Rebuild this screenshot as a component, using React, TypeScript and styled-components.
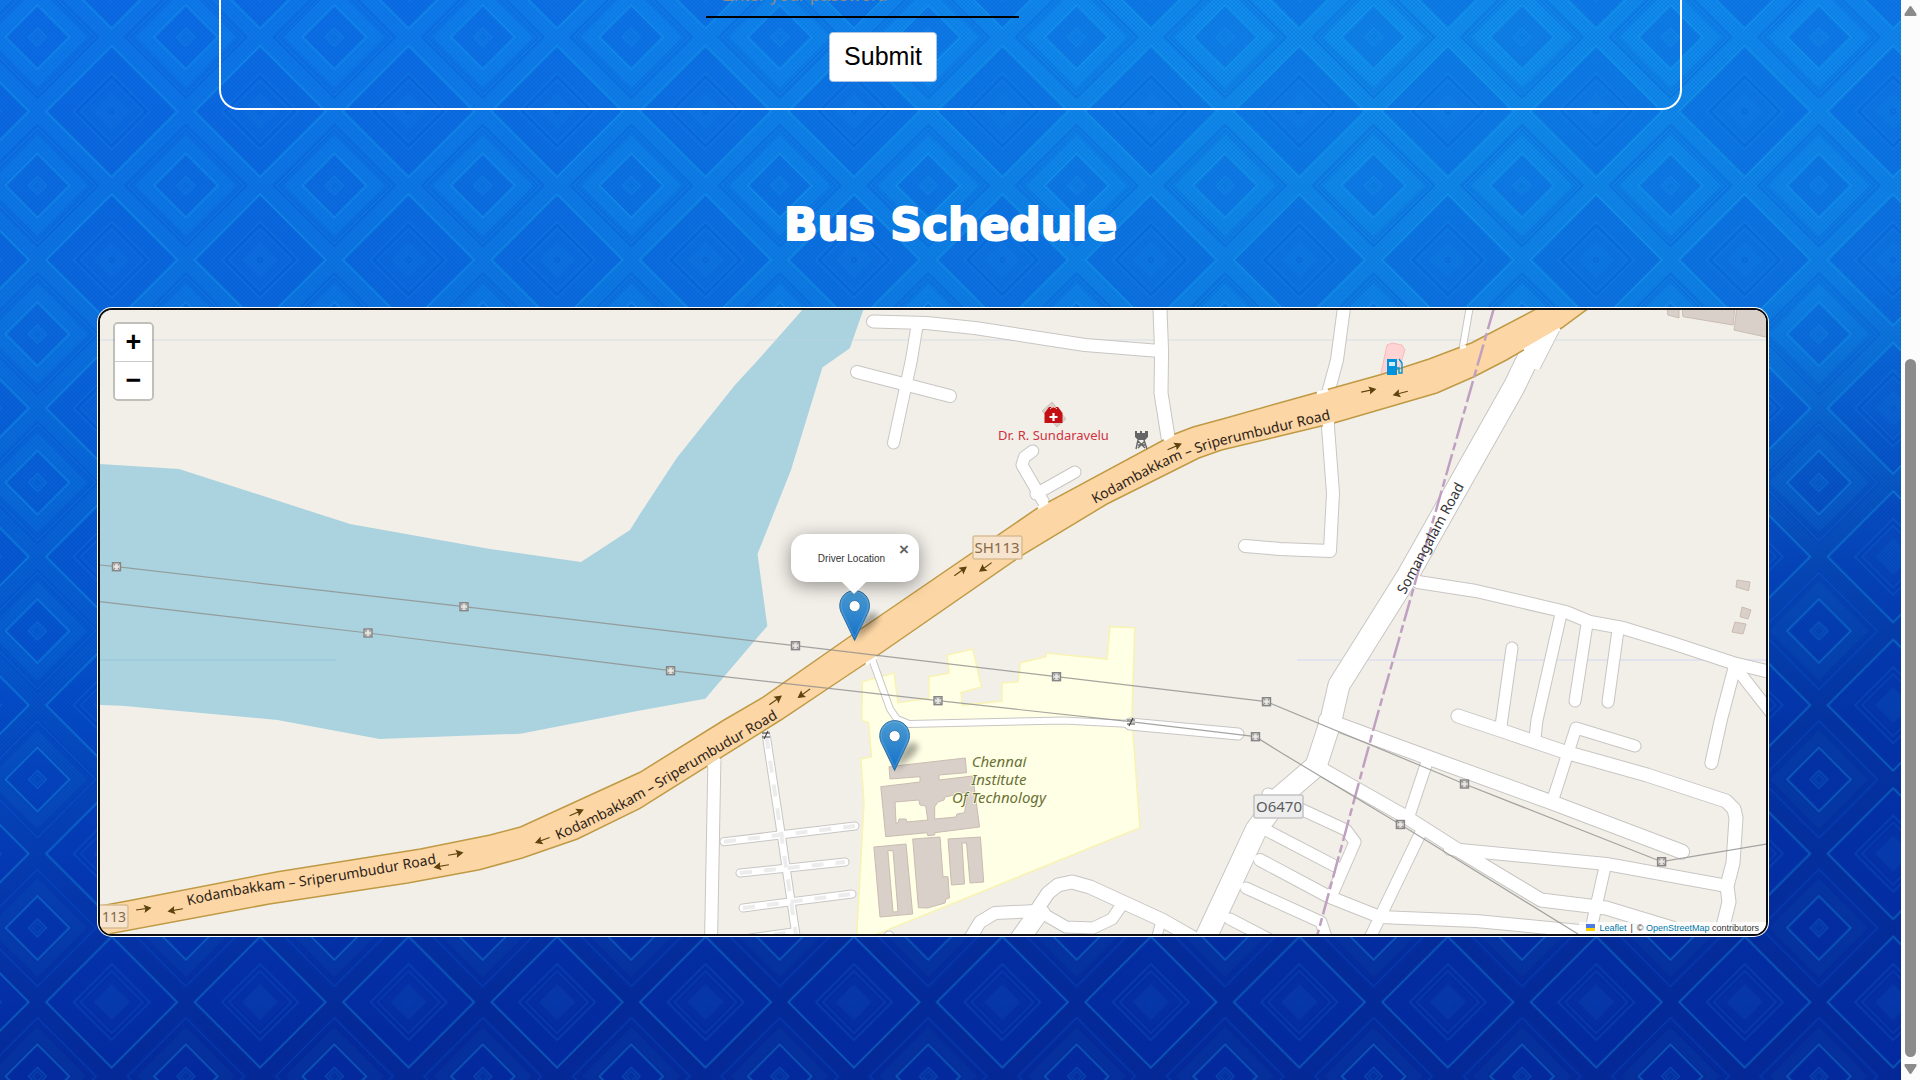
import React from "react";
import styled, { createGlobalStyle, css } from "styled-components";

const GlobalStyle = createGlobalStyle`
  *, *::before, *::after { box-sizing: border-box; }
  html, body { margin: 0; height: 100%; }
  body { overflow: hidden; font-family: "Liberation Sans", Arial, sans-serif; background: #0441b8; }
  #root { height: 100%; }
`;

const Shell = styled.div`
  display: flex;
  height: 100vh;
`;

const Page = styled.main`
  position: relative;
  isolation: isolate;
  flex: 1;
  min-width: 0;
  overflow: hidden;
  background:
    radial-gradient(ellipse 1200px 560px at 74% 4%, rgba(20, 168, 240, 0.5), rgba(20, 168, 240, 0) 100%),
    linear-gradient(168deg, rgba(4, 26, 126, 0) 45%, rgba(4, 26, 126, 0.55) 75%),
    linear-gradient(180deg, #0e78ea 0%, #0c74e0 28%, #0866d6 46%, #0553c8 66%, #0642bc 85%, #0638b0 100%);
`;

const Backdrop = styled.svg`
  position: absolute;
  inset: 0;
  z-index: -1;
  width: 100%;
  height: 100%;
`;

const LoginCard = styled.section`
  display: flex;
  justify-content: center;
  width: 77%;
  height: 110px;
  margin: 0 auto;
  padding: 0 151px 26px 16px;
  overflow: hidden;
  border: 2px solid #fff;
  border-top: 0;
  border-radius: 0 0 20px 20px;
`;

const LoginForm = styled.form`
  display: flex;
  flex-direction: column;
  justify-content: flex-end;
  align-items: center;
  gap: 14px;
  width: 354px;
`;

const PasswordInput = styled.input`
  flex: none;
  align-self: flex-start;
  width: 313px;
  height: 40px;
  padding: 0 16px 4px;
  border: 0;
  border-bottom: 2px solid #000;
  background: transparent;
  font: 18px/24px "Liberation Sans", Arial, sans-serif;
  color: #fff;
  &::placeholder { color: #8b8b8b; opacity: 1; }
`;

const SubmitButton = styled.button`
  flex: none;
  width: 108px;
  height: 50px;
  padding: 0 0 2px;
  border: 1px solid #a9c3e0;
  border-radius: 4px;
  background: #fff;
  color: #000;
  font: 25px/30px "Liberation Sans", Arial, sans-serif;
`;

const Title = styled.h1`
  margin: 85px 0 53px;
  text-align: center;
  color: #fff;
  font: bold 44px/60px "DejaVu Sans", sans-serif;
  -webkit-text-stroke: 2px #fff;
`;

const MapFrame = styled.section`
  position: relative;
  height: 628px;
  margin: 0 133px 0 98px;
  overflow: hidden;
  border: 2px solid #0b0d12;
  border-radius: 14px;
  box-shadow: 0 0 0 1px #fff;
  background: #f2efe9;
`;

const MapCanvas = styled.svg`
  display: block;
  width: 100%;
  height: 100%;
  font-family: "Noto Sans", sans-serif;
`;

const ZoomControl = styled.div`
  position: absolute;
  top: 12px;
  left: 13px;
  display: flex;
  flex-direction: column;
  border: 2px solid rgba(0, 0, 0, 0.2);
  border-radius: 5px;
  background-clip: padding-box;
`;

const ZoomButton = styled.button<{ $first?: boolean }>`
  width: 37px;
  height: 37px;
  padding: 0;
  border: 0;
  background: #fff;
  color: #000;
  font: bold 27px/37px "Liberation Sans", Arial, sans-serif;
  ${(p) =>
    p.$first
      ? css`
          height: 38px;
          border-bottom: 1px solid #ccc;
          border-radius: 3px 3px 0 0;
        `
      : css`
          border-radius: 0 0 3px 3px;
        `}
`;

const MarkerPin = styled.svg<{ $x: number; $y: number }>`
  position: absolute;
  left: calc(50% + ${(p) => p.$x - 15}px);
  top: ${(p) => p.$y - 51}px;
  width: 56px;
  height: 52px;
  overflow: visible;
`;

const Popup = styled.div`
  position: absolute;
  left: calc(50% - 142px);
  top: 224px;
  width: 128px;
  height: 48px;
  border-radius: 15px;
  background: #fff;
  box-shadow: 0 4px 17px rgba(0, 0, 0, 0.4);
  color: #333;
  font-size: 10px;
  line-height: 50px;
  text-align: center;
  padding-right: 7px;
  &::after {
    content: "";
    position: absolute;
    left: 50px;
    top: 47px;
    border: solid transparent;
    border-width: 13px 13px 0;
    border-top-color: #fff;
  }
`;

const PopupClose = styled.button`
  position: absolute;
  top: 5px;
  right: 5px;
  width: 20px;
  height: 22px;
  padding: 0;
  border: 0;
  background: transparent;
  color: #666;
  font: bold 17px/22px "Liberation Sans", Arial, sans-serif;
`;

const Attribution = styled.footer`
  position: absolute;
  right: 0;
  bottom: 0;
  display: flex;
  align-items: center;
  gap: 4px;
  height: 12px;
  padding: 0 7px;
  background: rgba(255, 255, 255, 0.8);
  color: #333;
  font-size: 9px;
  line-height: 12px;
  white-space: nowrap;
`;

const AttributionLink = styled.a`
  color: #0078a8;
  text-decoration: none;
`;

const Flag = styled.svg`
  display: inline-block;
  width: 9px;
  height: 7px;
  margin-right: 4px;
`;

const ScrollTrack = styled.aside`
  display: flex;
  flex-direction: column;
  align-items: center;
  width: 19px;
  padding: 5px 0;
  background: #fcfcfc;
`;

const ScrollThumb = styled.div`
  width: 11px;
  flex: 699;
  border-radius: 6px;
  background: #8b8b8b;
`;

const ScrollSpace = styled.div<{ $grow: number }>`
  flex: ${(p) => p.$grow};
`;

const ScrollArrow = styled.svg`
  flex: none;
  width: 13px;
  height: 12px;
  fill: #8b8b8b;
`;

const diamond = (x: number, y: number, r: number) =>
  `M${x} ${y - r}L${x + r} ${y}L${x} ${y + r}L${x - r} ${y}Z`;

const T = 148.46;
const corners = [
  [0, 0],
  [T, 0],
  [0, T],
  [T, T],
];

function DiamondBackdrop() {
  const m = T / 2;
  return (
    <Backdrop aria-hidden="true">
      <defs>
        <pattern id="weave" width="4" height="4" patternUnits="userSpaceOnUse">
          <path d="M0 0L4 4M4 0L0 4" stroke="#0030a8" strokeWidth="0.7" opacity="0.2" />
        </pattern>
        <pattern id="tiles" x={-36.8} y={-37.1} width={T} height={T} patternUnits="userSpaceOnUse">
          <g fill="none">
            {corners.map(([x, y]) => (
              <g key={`${x}-${y}`}>
                <path d={diamond(x, y, 65.5)} fill="#0030c8" fillOpacity="0.17" stroke="#18b4f4" strokeOpacity="0.34" strokeWidth="1.9" />
                <path d={diamond(x, y, 38)} stroke="#18a0f0" strokeOpacity="0.16" strokeWidth="1.6" />
                <path d={diamond(x, y, 35)} stroke="#0028b0" strokeOpacity="0.1" strokeWidth="2" />
                <path d={diamond(x, y, 31)} stroke="#18a0f0" strokeOpacity="0.14" strokeWidth="1.6" />
                <path d={diamond(x, y, 27)} fill="#1890f0" fillOpacity="0.03" />
                <path d={diamond(x, y, 18)} fill="#18a0f0" fillOpacity="0.08" />
                <circle cx={x} cy={y} r="2.2" stroke="#0040c8" strokeOpacity="0.3" />
              </g>
            ))}
            <path d={diamond(m, m, 60)} stroke="#0030c0" strokeOpacity="0.16" strokeWidth="3" />
            <path d={diamond(m, m, 58.5)} stroke="#18a0f8" strokeOpacity="0.26" strokeWidth="0.9" />
            <path d={diamond(m, m, 55.5)} stroke="#0030c0" strokeOpacity="0.2" strokeWidth="1.2" />
            <path d={diamond(m, m, 52)} stroke="#0030c0" strokeOpacity="0.1" strokeWidth="1.5" />
            <path d={diamond(m, m, 42)} stroke="#18a0f8" strokeOpacity="0.06" strokeWidth="10" />
            <path d={diamond(m, m, 32)} fill="#0030c8" fillOpacity="0.13" stroke="#18b4f4" strokeOpacity="0.33" strokeWidth="1.9" />
            <path d={diamond(m, m, 9)} stroke="#18a8f8" strokeOpacity="0.28" fill="#18a0f0" fillOpacity="0.06" />
            <path d={diamond(m, m, 5)} stroke="#18a8f8" strokeOpacity="0.22" strokeWidth="0.8" />
          </g>
        </pattern>
      </defs>
      <rect width="100%" height="100%" fill="url(#tiles)" />
      <rect width="100%" height="100%" fill="url(#weave)" />
    </Backdrop>
  );
}

const streets: [string, number][] = [
  ["873,321.5 926,323 975,328 1085,345 1160,351", 13],
  ["1159.6,300 1161.6,351 1161,393 1168,437", 14],
  ["917.5,323 911.4,360 893.5,443", 12],
  ["857,372 950,396", 13],
  ["1032.7,451 1024.5,457 1022,465 1044,503", 12],
  ["1075,472 1036,494", 12],
  ["1345,300 1337,360 1328,393 1328,427 1333,493 1330,551 1280,549 1245,546", 13],
  ["1471,300 1463,346", 7],
  ["1418,582 1476,591 1566,612 1590,622 1623,628 1672,643 1733,663 1770,672", 13],
  ["1512,648 1501,726", 12],
  ["1561,614 1537,720 1535,738", 12],
  ["1587,624 1575,701", 12],
  ["1618,630 1608,702", 12],
  ["1735,666 1720.8,720 1711.4,763", 13],
  ["1736,668 1772,714", 12],
  ["1458,716 1500,730 1565,752 1647,775 1726,801 1734,809 1736,818 1733,863 1727,886 1729,902 1723,926", 14],
  ["1635,746 1576,728 1552.7,800", 12],
  ["1326,720 1443,763 1553.5,803 1682,851.7", 15],
  ["1318,767 1406,817 1459.6,851 1541,900 1606,908 1672,928", 14],
  ["1450,849 1606.5,864 1727,886", 13],
  ["1427,762 1408.6,817", 12],
  ["1419.6,835 1380,917 1369,940", 12],
  ["1605,867 1593,920 1590,940", 12],
  ["1260,860 1329,896.7 1380,917 1476,921 1590,932", 13],
  ["1268,794 1346,830 1355,842 1331,897", 12],
  ["1262,828 1335,866", 12],
  ["1246,888 1321,922 1327,940", 12],
  ["1230,919 1280,945", 12],
  ["968,942 980,922 995,913 1036,911", 13],
  ["1014,942 1036,911 1048,893 1058,885 1072,882 1090,887 1162,920 1204,944", 14],
  ["1040,912 1066,927 1093,928 1112,919 1121,906", 12],
  ["1161,921 1156,940", 10],
  ["1044,912 1024,940", 12],
  ["714.5,755 711,942", 13],
  ["889,936 889,938", 10],
  ["1530,354 1514,387 1408,575 1339,685 1331,720 1316,766 1280,797 1256,830 1200,950", 22],
];

const tracks: string[] = [
  "766.5,737 781,833 797,942",
  "724,841.7 855,826",
  "740,873 845,862",
  "743,908 852,894",
  "750,938 793,932",
];

const towers: [number, number][] = [
  [116.5, 566.7], [464, 606.7], [795.5, 645.7], [1056.5, 676.7], [1266.5, 701.7],
  [1464.5, 784], [1661.6, 861.7], [368, 633], [670.6, 670.7], [938, 700.7],
  [1255.5, 736.7], [1400.4, 824.5],
];

const arrows: [number, number, number][] = [
  [143, 909, -8], [176, 910, 170], [455, 854, -10], [442, 866, 170],
  [576, 813, -24], [543, 840, 160], [775, 700.7, -36], [804.5, 693, 144],
  [960, 571.7, -36], [986, 566.7, 144], [1174, 447, -24], [1368, 390.7, -12],
  [1401, 393, 165],
];

const schoolGrounds =
  "862.4,681.7 894,673 898,702.7 929,698 929,676.7 949,673 947,655 972.7,649 981.6,687 961,692.7 962.4,705 1002,701 1002,683 1018,681.7 1020.4,662.7 1046,656.7 1046.5,653 1107,659 1110,626.7 1134.7,627.7 1132,720 1140,827.7 872.7,936 856.7,936 864,803 860.8,759 871.4,756.7 868.6,722.7 861.6,720";

const buildings = [
  "M889 766.7L965.3 758 966.5 772.7 939 775 939 780 972.7 776 979.6 827 934.7 832.7 934.7 835 927.8 835.7 927 832.7 885.7 836.7 880.8 786.7 920 782 920 776.7 890 779ZM895 802L918.8 800 920 805 925.7 806 927.8 820 907 822 906 819 899 819 898 823 896 823ZM934.7 806.7L938 802 944 800 945 797 968 792 964.5 812.7 957 814 956 817 934.7 819Z",
  "M873.9 847L906 844 912.7 914 880 917ZM887.8 850.7L893 850.7 898 911.7 893 912Z",
  "M912.7 839L940 837 943 876.7 948 876.7 949.4 898 946 899 945 903 932 906.7 928 908 918.4 907.7Z",
  "M948 839L980.4 837 983.7 882 970 883 966.5 843 962 843 964.5 884 951.4 885Z",
  "M1667 306L1679 306 1679 318 1667.8 315Z",
  "M1682 306L1735 306 1733 325 1683 316.7Z",
  "M1737 306L1770 306 1770 338 1734 330Z",
  "M1737 580L1750 582 1748.6 590.7 1736 587Z",
  "M1742 607L1751 610 1748 619 1740 616.7Z",
  "M1735 622L1746 624 1743 634 1732 632Z",
];

const highwayTop =
  "90,908 128.6,900.7 277.6,871.7 420.4,849 490,835 520.4,827 640,772.3 724,720 762.4,697.7 852,635 1038,507.7 1174.7,434 1193,427 1226,418 1280,402.7 1382,374.3 1429,359 1471.8,342.7 1533,310.7 1550,300";
const highwayBottom =
  "1600,300 1585.3,310.7 1561.6,328 1506.5,360 1474,376.7 1437,393 1335,422.7 1280,436 1221.6,450 1199,458 1107,504 1021.6,555.7 876.7,656 831.8,686 780.8,720 640,808.3 577.5,839 522.4,858 479.6,869.7 408,883 269.4,904 110,933.7 80,940";

function Tower({ x, y }: { x: number; y: number }) {
  return (
    <g transform={`translate(${x} ${y})`}>
      <rect x="-4" y="-4" width="8" height="8" fill="#dcdad6" stroke="#858585" strokeWidth="1.4" />
      <path d="M-3.500 -3.500L3.500 3.500M3.500 -3.500L-3.500 3.500" stroke="#909090" strokeWidth="1.1" />
      <circle r="2" fill="#e8e6e2" />
    </g>
  );
}

function StreetMap() {
  return (
    <MapCanvas viewBox="100 310 1666 624" preserveAspectRatio="xMidYMid slice" role="img" aria-label="Street map around Chennai Institute Of Technology">
      <defs>
        <path id="road-west" d="M188 905.5Q240 893 283 888.5T434 864L480 854" />
        <path id="road-mid" d="M558 840Q610 818 656 790T778 718L820 690" />
        <path id="road-east" d="M1095 504L1150 474Q1190 453 1225 444.500T1328 420L1370 408" />
        <path id="road-somangalam" d="M1405 595L1482 454" />
      </defs>
      <rect x="0" y="200" width="1900" height="900" fill="#f2efe9" />
      <path
        fill="#aad3df"
        d="M90 463.500L179 469 350 524 490 549 581 562 630 530 640 514 676.7 458 735 385 758 360 804 308 864 308 849.8 348.3 822.4 367.5 791 470 757.5 554 767.3 626 705.3 698.7 640 710.5 520.4 733.7 379.6 739 277.5 720 122 705.7 90 704.5Z"
      />
      <polygon points={schoolGrounds} fill="#ffffe5" stroke="#f8f3b4" strokeWidth="1.6" />
      <path d="M100 340H1766" stroke="#c4d4e4" strokeOpacity="0.6" />
      <path d="M100 660H336" stroke="#98c4d8" />
      <path d="M1297 660H1766" stroke="#dcdff0" strokeWidth="1.5" />
      <g fill="#d9d0c9" stroke="#c9bcb2" strokeWidth="1" fillRule="evenodd">
        {buildings.map((d) => (
          <path key={d} d={d} />
        ))}
      </g>
      <g fill="none" strokeLinecap="round" strokeLinejoin="round">
        <g stroke="#c8c6c3">
          {streets.map(([pts, w]) => (
            <polyline key={pts} points={pts} strokeWidth={w + 1} />
          ))}
          <polyline points="872.7,661 890,709 897,719 909,724 1064,720.5 1130,724" strokeWidth="8" />
          <polyline points="1130,724 1238,734" strokeWidth="13" />
          {tracks.map((pts) => (
            <polyline key={pts} points={pts} strokeWidth="9" />
          ))}
        </g>
        <g stroke="#fff">
          {streets.map(([pts, w]) => (
            <polyline key={pts} points={pts} strokeWidth={w - 1} />
          ))}
          <polyline points="872.7,661 890,709 897,719 909,724 1064,720.5 1130,724" strokeWidth="6" />
          <polyline points="1130,724 1238,734" strokeWidth="11" />
          {tracks.map((pts) => (
            <polyline key={pts} points={pts} strokeWidth="7" />
          ))}
        </g>
        <g stroke="#ececec" strokeWidth="4" strokeDasharray="12 12" strokeLinecap="butt">
          {tracks.map((pts) => (
            <polyline key={pts} points={pts} />
          ))}
        </g>
      </g>
      <path d="M1387 345L1392 343 1402 345 1405 350 1398 372 1380 378Z" fill="#ffd3d3" stroke="#f6bcbc" />
      <path d="M1521 351L1562 326 1540 369 1511 369Z" fill="#fff" />
      <path d="M1562 326L1540 369" stroke="#c8c6c3" fill="none" />
      <polygon points={`${highwayTop} ${highwayBottom}`} fill="#fcd6a4" />
      <g fill="none" stroke="#bf9a45" strokeWidth="1.5">
        <polyline points={highwayTop} />
        <polyline points={highwayBottom} />
      </g>
      <g stroke="#fff" strokeWidth="3">
        <path d="M1164 440L1174 434M1038 508L1048 502M1317 393L1328 390M1323 426L1334 423M1524 350L1560 329M1460 348L1466 346M866 664L877 657M708 767L720 759" />
      </g>
      <polyline
        points="1494,308 1479,360 1441,493 1416.7,577 1376,720 1316,940"
        fill="none"
        stroke="#bfa0c0"
        strokeWidth="2.5"
        strokeDasharray="22 4 8 4"
      />
      <g fill="none" stroke="#8f8f8c" strokeOpacity="0.8" strokeWidth="1.2">
        <polyline points="90,564 116.5,566.7 464,606.7 795,645.7 1056.5,676.7 1266.5,701.7 1419,765 1464.5,784 1661.6,861.7 1770,843.5" />
        <polyline points="90,600.5 368,633 670.6,670.7 938,700.7 1130,721.7 1255.5,736.7 1280,752 1400.4,824.5 1578,934" />
      </g>
      {towers.map(([x, y]) => (
        <Tower key={`${x}`} x={x} y={y} />
      ))}
      <g stroke="#444" strokeWidth="1.2">
        <path d="M1127 720H1135M1127 724H1135M1129 726L1133 718M762 733H770M762 737H770M764 739L768 731" />
      </g>
      <g fill="#5e430c" stroke="#5e430c">
        {arrows.map(([x, y, a]) => (
          <path key={`${x}-${y}`} transform={`translate(${x} ${y}) rotate(${a})`} d="M-7 0H3L2 -3 7.500 0 2 3 3 0" strokeWidth="1.1" />
        ))}
      </g>
      <g fontSize="14" fill="#2c2318" stroke="#fcd6a4" strokeWidth="1" paintOrder="stroke">
        <text><textPath href="#road-west">Kodambakkam – Sriperumbudur Road</textPath></text>
        <text><textPath href="#road-mid">Kodambakkam – Sriperumbudur Road</textPath></text>
        <text><textPath href="#road-east">Kodambakkam – Sriperumbudur Road</textPath></text>
      </g>
      <text fontSize="14" fill="#333"><textPath href="#road-somangalam">Somangalam Road</textPath></text>

      <g fontSize="15" textAnchor="middle">
        <rect x="973" y="536" width="49" height="23" rx="2" fill="#f6e4cf" stroke="#d9bd94" strokeWidth="1.5" />
        <text x="997" y="553" fill="#866a45">SH113</text>
        <rect x="80" y="905" width="48" height="23" rx="2" fill="#f6e4cf" stroke="#d9bd94" strokeWidth="1.5" />
        <text x="114" y="922" fill="#866a45" fontSize="14">113</text>
        <rect x="1254" y="795" width="49" height="23" rx="2" fill="#eeeeee" stroke="#c4c4c4" strokeWidth="1.5" />
        <text x="1279" y="812" fill="#5c5c5c">O6470</text>
      </g>
      <g fontSize="15" fontStyle="italic" textAnchor="middle" fill="#6a7136" stroke="#ffffe5" strokeWidth="2" strokeOpacity="0.7" paintOrder="stroke">
        <text x="999" y="767">Chennai</text>
        <text x="999" y="785">Institute</text>
        <text x="999" y="803">Of Technology</text>
      </g>

      <path d="M1052 402L1066 419 1057 427 1042 411Z" fill="#d9d0c9" stroke="#c9bcb2" strokeWidth="0.8" />
      <path d="M1044.500 423V413L1049 407H1058L1062.500 413V423Z" fill="#c40f14" />
      <path d="M1053.500 413V421M1049.500 417H1057.500" stroke="#fff" strokeWidth="2.2" />
      <path d="M1050 409Q1053.500 405 1057 409" fill="none" stroke="#f2dcd8" />
      <text x="1053.5" y="440" fontSize="13" textAnchor="middle" fill="#d0323f">Dr. R. Sundaravelu</text>

      <path d="M1135 431H1137V433H1140V431H1142V433H1145V431H1148V437L1145 440H1138L1135 437Z" fill="#666" />
      <path d="M1138 440L1136 449M1144 440L1147 449M1138 445H1145M1138 448L1145 441M1145 448L1138 441" stroke="#666" strokeWidth="1.4" fill="none" />

      <path d="M1387 359H1397V375H1387Z" fill="#0092da" />
      <path d="M1389 362H1395V366H1389Z" fill="#cfeaf8" />
      <path d="M1397 368H1399V373H1402V363L1399 359" stroke="#0092da" strokeWidth="1.4" fill="none" />
    </MapCanvas>
  );
}

function Pin({ x, y }: { x: number; y: number }) {
  return (
    <MarkerPin $x={x} $y={y} viewBox="0 0 45 42" role="img" aria-label="Map marker">
      <defs>
        <linearGradient id="pin-fill" x1="0" y1="0" x2="0" y2="1">
          <stop offset="0" stopColor="#4a9bd3" />
          <stop offset="1" stopColor="#1470c8" />
        </linearGradient>
        <filter id="pin-blur" x="-40%" y="-40%" width="180%" height="180%">
          <feGaussianBlur stdDeviation="2.4" />
        </filter>
      </defs>
      <path d="M12.500 41L17 26Q24 16 30 19 34 22 27 29Z" fill="#000" opacity="0.34" filter="url(#pin-blur)" />
      <path
        d="M12.500 0.500C5.800 0.500 0.500 5.900 0.500 12.700 0.500 15 1.100 17 2.100 19L12.500 40.800 22.900 19C23.900 17 24.500 15 24.500 12.700 24.500 5.900 19.200 0.500 12.500 0.500Z"
        fill="url(#pin-fill)"
        stroke="#2e6f9f"
        strokeWidth="0.8"
      />
      <path
        d="M12.500 1.600C6.400 1.600 1.600 6.500 1.600 12.700 1.600 14.800 2.100 16.700 3.100 18.500L12.500 38.300 21.900 18.500C22.900 16.700 23.400 14.800 23.400 12.700 23.400 6.500 18.600 1.600 12.500 1.600Z"
        fill="none"
        stroke="#fff"
        strokeOpacity="0.14"
      />
      <circle cx="12.500" cy="13" r="4.500" fill="#fff" stroke="#2c72a8" strokeWidth="0.7" />
    </MarkerPin>
  );
}

export default function App() {
  return (
    <>
      <GlobalStyle />
      <Shell>
        <Page>
          <DiamondBackdrop />
          <LoginCard>
            <LoginForm onSubmit={(e: React.FormEvent) => e.preventDefault()}>
              <PasswordInput type="password" aria-label="Password" placeholder="Enter your password" />
              <SubmitButton type="submit">Submit</SubmitButton>
            </LoginForm>
          </LoginCard>
          <Title>Bus Schedule</Title>
          <MapFrame>
            <StreetMap />
            <Pin x={-79} y={331} />
            <Pin x={-39} y={461} />
            <Popup>
              Driver Location
              <PopupClose type="button" aria-label="Close popup">×</PopupClose>
            </Popup>
            <ZoomControl>
              <ZoomButton type="button" aria-label="Zoom in" $first>+</ZoomButton>
              <ZoomButton type="button" aria-label="Zoom out">−</ZoomButton>
            </ZoomControl>
            <Attribution>
              <AttributionLink href="https://leafletjs.com">
                <Flag viewBox="0 0 9 7" aria-hidden="true">
                  <path fill="#4c7be1" d="M0 0h9v4H0z" />
                  <path fill="#ffd500" d="M0 4h9v3H0z" />
                </Flag>
                Leaflet
              </AttributionLink>
              <span>|</span>
              <span>© <AttributionLink href="https://www.openstreetmap.org/copyright">OpenStreetMap</AttributionLink> contributors</span>
            </Attribution>
          </MapFrame>
        </Page>
        <ScrollTrack aria-hidden="true">
          <ScrollArrow viewBox="0 0 13 12"><path d="M6.500 1Q7.300 1 7.800 2L12.500 9Q13 11 11.500 11H1.500Q0 11 0.500 9L5.200 2Q5.700 1 6.500 1Z" /></ScrollArrow>
          <ScrollSpace $grow={342} />
          <ScrollThumb />
          <ScrollSpace $grow={6} />
          <ScrollArrow viewBox="0 0 13 12"><path d="M6.500 11Q7.300 11 7.800 10L12.500 3Q13 1 11.500 1H1.500Q0 1 0.500 3L5.200 10Q5.700 11 6.500 11Z" /></ScrollArrow>
        </ScrollTrack>
      </Shell>
    </>
  );
}
